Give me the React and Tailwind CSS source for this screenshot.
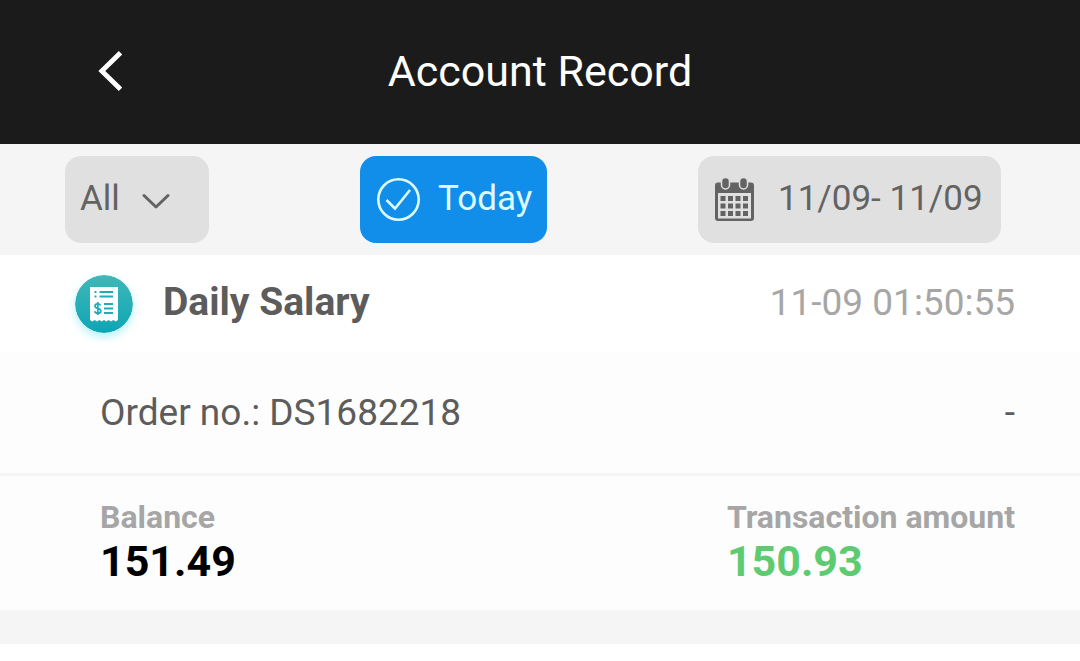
import { useState } from 'react';

function BackIcon() {
  return (
    <svg className="w-6 h-10" viewBox="0 0 24 40" fill="none" stroke="currentColor" strokeWidth="4.8">
      <path d="M22.500 1.800 3.800 20l18.700 18.200" />
    </svg>
  );
}

function CheckCircleIcon() {
  return (
    <svg className="w-11 h-11" viewBox="0 0 44 44" fill="none" stroke="currentColor" strokeWidth="2.6">
      <circle cx="22.5" cy="21.5" r="20.2" />
      <path d="M10.500 22 19 30.500 34 12" />
    </svg>
  );
}

function CalendarIcon() {
  const columns = [6.5, 14, 21.5, 29];
  const rows = [18, 25.5, 33];

  return (
    <svg className="w-10 h-11" viewBox="0 0 40 44" fill="currentColor">
      <path
        fillRule="evenodd"
        d="M4 4.500h33A3 3 0 0 1 40 7.500v32.500a3 3 0 0 1-3 3h-33a3 3 0 0 1-3-3V7.500a3 3 0 0 1 3-3ZM4 15v25.500h33V15Z"
      />
      <rect x="7.500" y="-.5" width="8" height="11.500" rx="4" stroke="#e0e0e0" strokeWidth="1.500" />
      <rect x="25.500" y="-.5" width="8" height="11.500" rx="4" stroke="#e0e0e0" strokeWidth="1.500" />
      {rows.map((y) =>
        columns.map((x) => <rect key={`${x}-${y}`} x={x} y={y} width="5" height="5" />)
      )}
    </svg>
  );
}

function SalaryIcon() {
  return (
    <svg className="w-[58px] h-[58px] rounded-full shadow-[0_4px_8px_#b5f1f8]" viewBox="0 0 58 58">
      <defs>
        <linearGradient id="salary" x1="0" y1="0" x2="0" y2="1">
          <stop offset="0" stopColor="#3fb8b8" />
          <stop offset="1" stopColor="#0ea5b5" />
        </linearGradient>
      </defs>
      <circle cx="29" cy="29" r="29" fill="url(#salary)" />
      <path
        fill="#fff"
        d="M15 12h28v33l-2.300 1.600-2.400-1.600-2.300 1.600-2.300-1.600-2.400 1.600-2.300-1.600-2.300 1.600-2.400-1.600-2.300 1.600-2.300-1.600-2.400 1.600L15 45Z"
      />
      <g fill="none" stroke="#21adb7" strokeWidth="1.800">
        <path d="M19.500 17h2m3 0H38M19.500 21.500h2m3 0H38M29 29h9m-9 4.500h9M29 38h9" />
        <path d="M25.500 30.500c-.500-1.200-1.500-1.700-2.800-1.700-1.600 0-2.700.800-2.700 2.100 0 3.200 5.800 1.800 5.800 5 0 1.500-1.300 2.300-3 2.300-1.500 0-2.700-.700-3.100-2M22.800 27v13" />
      </g>
    </svg>
  );
}

function FilterBar() {
  const [type, setType] = useState('all');

  return (
    <div className="flex items-center justify-between bg-[#f5f5f5] py-3 pl-[65px] pr-[79px] text-[35px]">
      <div className="relative">
        <select
          aria-label="Record type"
          value={type}
          onChange={(e) => setType(e.target.value)}
          className="block appearance-none w-36 h-[87px] rounded-2xl bg-[#e0e0e0] pl-[15px] text-[#636363] cursor-pointer"
        >
          <option value="all">All</option>
          <option value="salary">Daily Salary</option>
        </select>
        <svg
          className="absolute left-[76px] top-[37px] w-[30px] h-4 text-[#636363] pointer-events-none"
          viewBox="0 0 30 16"
          fill="none"
          stroke="currentColor"
          strokeWidth="3"
          strokeLinecap="round"
          strokeLinejoin="round"
        >
          <path d="M3 2.500 15 14 27 2.500" />
        </svg>
      </div>

      <button className="flex items-center w-[187px] h-[87px] rounded-2xl bg-[#118eea] pl-4 gap-[18px] text-[#dcfaff] cursor-pointer">
        <CheckCircleIcon />
        <span>Today</span>
      </button>

      <button className="flex items-center w-[303px] h-[87px] rounded-2xl bg-[#e0e0e0] pl-4 gap-6 text-[#636363] cursor-pointer">
        <CalendarIcon />
        <span className="whitespace-nowrap">11/09- 11/09</span>
      </button>
    </div>
  );
}

function RecordCard({ record }) {
  return (
    <article className="border-b-[34px] border-[#f5f5f5] bg-[#fdfdfd]">
      <div className="flex items-center h-[97px] bg-white pl-[75px] pr-[65px]">
        <SalaryIcon />
        <h2 className="ml-[30px] pb-0.5 text-[39px] font-bold text-[#5c5c5c]">{record.title}</h2>
        <time className="ml-auto pb-0.5 text-[37px] text-[#a6a6a6]">{record.time}</time>
      </div>

      <div className="flex items-center justify-between h-[124px] border-b-3 border-[#f5f5f5] pl-[100px] pr-[65px] text-[37px] text-[#5c5c5c]">
        <span>Order no.: {record.orderNo}</span>
        <span>-</span>
      </div>

      <dl className="flex justify-between h-[134px] pt-[23px] pl-[100px] pr-[65px]">
        <div>
          <dt className="text-[32px] leading-9 font-bold text-[#a6a6a6]">Balance</dt>
          <dd className="text-[43px] leading-[52px] font-bold text-black">{record.balance}</dd>
        </div>
        <div>
          <dt className="text-[32px] leading-9 font-bold text-[#a6a6a6]">Transaction amount</dt>
          <dd className="text-[43px] leading-[52px] font-bold text-[#5fcb71]">{record.amount}</dd>
        </div>
      </dl>
    </article>
  );
}

export default function App() {
  const records = [
    {
      title: 'Daily Salary',
      time: '11-09 01:50:55',
      orderNo: 'DS1682218',
      balance: '151.49',
      amount: '150.93',
    },
  ];

  return (
    <div className="min-h-screen bg-white font-[Roboto,sans-serif]">
      <header className="grid grid-cols-[1fr_auto_1fr] items-center h-36 pb-0.5 bg-[#1b1b1b] text-white">
        <button aria-label="Back" className="justify-self-start ml-[98px] cursor-pointer">
          <BackIcon />
        </button>
        <h1 className="text-[43px]">Account Record</h1>
      </header>
      <FilterBar />
      <main>
        {records.map((record) => (
          <RecordCard key={record.orderNo} record={record} />
        ))}
      </main>
    </div>
  );
}
